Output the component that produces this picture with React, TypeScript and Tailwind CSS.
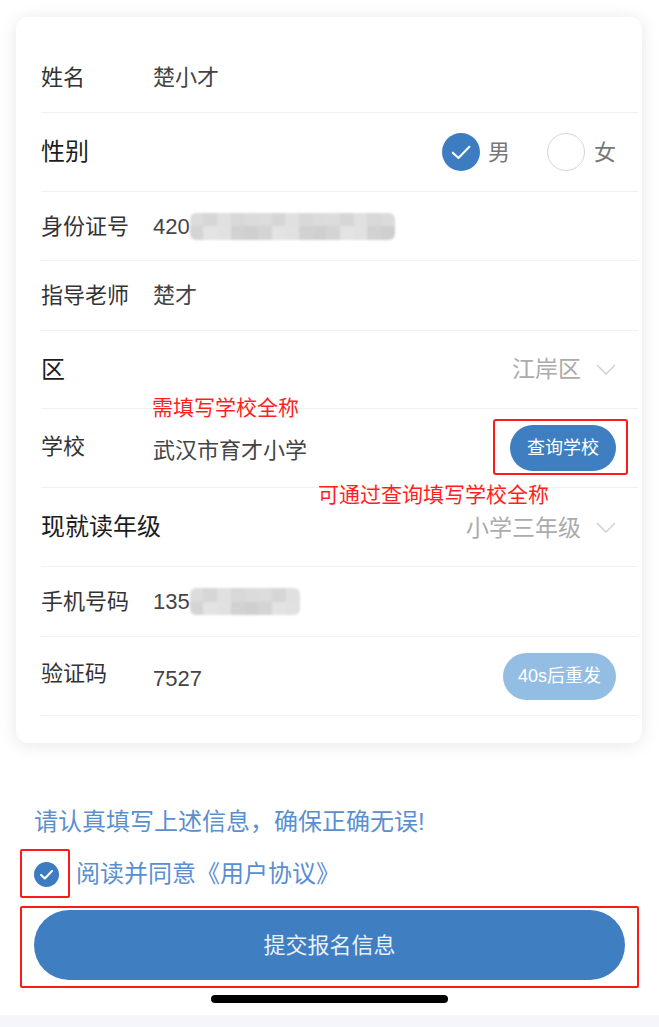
import React from 'react';

const blurShades = [
  'bg-[#dcdcdc]', 'bg-[#d2d2d2]', 'bg-[#e2e2e2]', 'bg-[#d6d6d6]', 'bg-[#cfcfcf]',
  'bg-[#dadada]', 'bg-[#e0e0e0]', 'bg-[#d4d4d4]', 'bg-[#dddddd]', 'bg-[#d8d8d8]',
  'bg-[#e3e3e3]', 'bg-[#d0d0d0]', 'bg-[#dbdbdb]', 'bg-[#e1e1e1]', 'bg-[#d7d7d7]',
];

function Mosaic({ width, cols }: { width: string; cols: number }) {
  return (
    <div className={`${width} h-[27px] flex flex-col blur-[1px] rounded-[6px] overflow-hidden`}>
      {[0, 1].map((r) => (
        <div key={r} className="flex flex-1">
          {Array.from({ length: cols }).map((_, i) => (
            <div key={i} className={`flex-1 ${blurShades[(i * 3 + r * 7) % blurShades.length]}`} />
          ))}
        </div>
      ))}
    </div>
  );
}

function Chevron() {
  return (
    <svg width="20" height="12" viewBox="0 0 20 12" className="ml-[15px]">
      <polyline points="1,1 10,10 19,1" fill="none" stroke="#cfcfcf" strokeWidth="1.4" />
    </svg>
  );
}

function Check({ size, stroke }: { size: number; stroke: number }) {
  return (
    <svg width={size} height={size} viewBox="0 0 24 24">
      <circle cx="12" cy="12" r="12" fill="#3d7cc0" />
      <polyline points="6.8,12.4 10.4,15.8 17.3,8.7" fill="none" stroke="#fff" strokeWidth={stroke} strokeLinecap="round" strokeLinejoin="round" />
    </svg>
  );
}

const label = 'w-[112px] shrink-0 text-[22px] text-[#333]';
const strongLabel = 'text-[24px] text-[#1c1c1c]';
const value = 'text-[22px] text-[#444]';
const row = 'flex items-center border-b border-[#f0f0f0] pr-[22px]';

export default function App() {
  return (
    <div className="w-[659px] h-[1027px] bg-white font-['Liberation_Sans','Noto_Sans_CJK_SC',sans-serif] flex flex-col">
      <div className="pt-[17px] pl-[16px] pr-[17px]">
        <div className="rounded-[12px] bg-white shadow-[0_2px_18px_rgba(0,0,0,0.10)] pt-[26px] pb-[27px] pl-[25px] pr-[4px]">
          <div className={`${row} h-[70px]`}>
            <span className={label}>姓名</span>
            <span className={value}>楚小才</span>
          </div>

          <div className={`${row} h-[79px]`}>
            <span className={strongLabel}>性别</span>
            <div className="ml-auto flex items-center">
              <Check size={38} stroke={1.3} />
              <span className="ml-[8px] text-[22px] text-[#777]">男</span>
              <span className="ml-[37px] w-[38px] h-[38px] rounded-full border-[1.5px] border-[#d6d6d6]" />
              <span className="ml-[9px] text-[22px] text-[#777]">女</span>
            </div>
          </div>

          <div className={`${row} h-[69px]`}>
            <span className={label}>身份证号</span>
            <span className={value}>420</span>
            <Mosaic width="w-[205px]" cols={15} />
          </div>

          <div className={`${row} h-[70px]`}>
            <span className={label}>指导老师</span>
            <span className={value}>楚才</span>
          </div>

          <div className={`${row} h-[78px]`}>
            <span className={strongLabel}>区</span>
            <div className="ml-auto flex items-center">
              <span className="text-[23px] text-[#ababab]">江岸区</span>
              <Chevron />
            </div>
          </div>

          <div className={`${row} h-[79px] relative`}>
            <span className="absolute left-[111px] top-[-14px] text-[21px] leading-[26px] text-[#ff1f1f]">需填写学校全称</span>
            <span className={`${label} mb-[4px]`}>学校</span>
            <span className={`${value} mt-[4px]`}>武汉市育才小学</span>
            <div className="ml-auto relative">
              <button className="w-[106px] h-[46px] rounded-full bg-[#3f7ec0] text-white text-[18px]">查询学校</button>
              <div className="absolute left-[-17px] top-[-6px] w-[135px] h-[56px] border-[2.5px] border-[#ff1a1a] rounded-[3px]" />
            </div>
            <span className="absolute left-[277px] top-[73px] text-[21px] leading-[26px] text-[#ff1f1f] z-10">可通过查询填写学校全称</span>
          </div>

          <div className={`${row} h-[79px]`}>
            <span className={strongLabel}>现就读年级</span>
            <div className="ml-auto flex items-center pt-[2px]">
              <span className="text-[23px] text-[#ababab]">小学三年级</span>
              <Chevron />
            </div>
          </div>

          <div className={`${row} h-[70px]`}>
            <span className={label}>手机号码</span>
            <span className={value}>135</span>
            <Mosaic width="w-[110px]" cols={8} />
          </div>

          <div className={`${row} h-[79px]`}>
            <span className={`${label} mb-[6px]`}>验证码</span>
            <span className={`${value} mt-[4px]`}>7527</span>
            <button className="ml-auto w-[113px] h-[47px] rounded-full bg-[#94bde3] text-white text-[18px]">40s后重发</button>
          </div>
        </div>
      </div>

      <p className="mt-[63px] pl-[34px] text-[24px] leading-[32px] text-[#5a8fcf]">请认真填写上述信息，确保正确无误!</p>

      <div className="mt-[20px] pl-[34px] flex items-center h-[32px]">
        <div className="relative">
          <Check size={25} stroke={2} />
          <div className="absolute left-[-14px] top-[-13px] w-[50px] h-[49px] border-[2.5px] border-[#ff1a1a] rounded-[2px]" />
        </div>
        <span className="ml-[17px] text-[24px] text-[#5a8fcf]">阅读并同意《用户协议》</span>
      </div>

      <div className="mt-[20px] px-[34px] relative">
        <button className="w-full h-[70px] rounded-full bg-[#3f7ec0] text-[#eaf0f8] text-[22px]">提交报名信息</button>
        <div className="absolute left-[20px] right-[20px] top-[-4px] h-[82px] border-[2.5px] border-[#ff1a1a] rounded-[2px]" />
      </div>

      <div className="mt-[15px] mx-auto w-[237px] h-[8px] rounded-full bg-black" />
      <div className="mt-[12px] h-[12px] bg-[#f4f6fb]" />
    </div>
  );
}
